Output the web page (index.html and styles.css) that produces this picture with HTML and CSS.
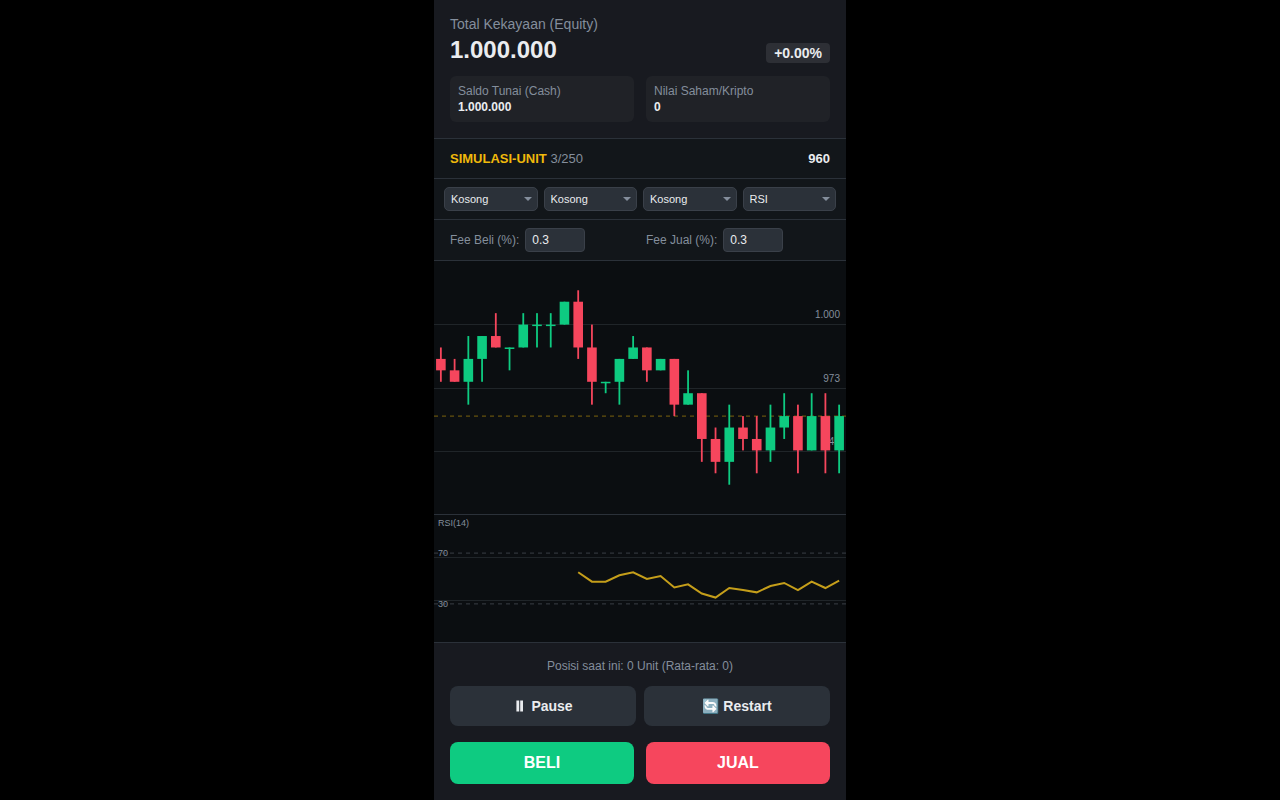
FILE: index.html
```html
<!DOCTYPE html>
<html lang="id">
<head>
<meta charset="utf-8">
<meta name="viewport" content="width=device-width, initial-scale=1">
<title>Simulasi Trading</title>
<link rel="stylesheet" href="styles.css">
</head>
<body>
<main class="app">
  <header class="summary">
    <div class="summary-label">Total Kekayaan (Equity)</div>
    <div class="equity-row">
      <div class="equity">1.000.000</div>
      <div class="badge">+0.00%</div>
    </div>
    <div class="stats">
      <div class="stat"><div class="stat-label">Saldo Tunai (Cash)</div><div class="stat-value">1.000.000</div></div>
      <div class="stat"><div class="stat-label">Nilai Saham/Kripto</div><div class="stat-value">0</div></div>
    </div>
  </header>

  <section class="ticker">
    <div><span class="ticker-name">SIMULASI-UNIT</span> <span class="ticker-count">3/250</span></div>
    <div class="ticker-price">960</div>
  </section>

  <section class="indicators">
    <div class="select-wrap"><select class="select" aria-label="Indikator 1"><option>Kosong</option><option>RSI</option></select></div>
    <div class="select-wrap"><select class="select" aria-label="Indikator 2"><option>Kosong</option><option>RSI</option></select></div>
    <div class="select-wrap"><select class="select" aria-label="Indikator 3"><option>Kosong</option><option>RSI</option></select></div>
    <div class="select-wrap"><select class="select" aria-label="Indikator 4"><option>Kosong</option><option selected>RSI</option></select></div>
  </section>

  <section class="fees">
    <div class="fee"><label for="fee-buy">Fee Beli (%):</label><input class="fee-input" id="fee-buy" type="text" inputmode="decimal" value="0.3"></div>
    <div class="fee"><label for="fee-sell">Fee Jual (%):</label><input class="fee-input" id="fee-sell" type="text" inputmode="decimal" value="0.3"></div>
  </section>

  <section class="charts">
    <div class="pane pane-price"><svg class="plot" id="price" role="img" aria-label="Grafik harga"></svg></div>
    <div class="pane pane-rsi"><svg class="plot" id="rsi" role="img" aria-label="RSI(14)"></svg></div>
  </section>

  <footer class="controls">
    <div class="position">Posisi saat ini: 0 Unit (Rata-rata: 0)</div>
    <div class="tools">
      <button class="btn btn-tool" type="button"><svg class="pause-icon" viewBox="0 0 14 14" aria-hidden="true"><path d="M3.4 1.5h2.8v11H3.4zM7.2 1.5h2.8v11H7.2z"/></svg>Pause</button>
      <button class="btn btn-tool" type="button">🔄 Restart</button>
    </div>
    <div class="trade">
      <button class="btn btn-buy" type="button">BELI</button>
      <button class="btn btn-sell" type="button">JUAL</button>
    </div>
  </footer>
</main>
<script src="chart.js"></script>
</body>
</html>
```

FILE: styles.css
```css
* { box-sizing: border-box; }

body {
  margin: 0;
  background: #000;
  color: #eaecef;
  font-family: "Liberation Sans", Arial, sans-serif;
}

.app {
  display: flex;
  flex-direction: column;
  width: 100%;
  max-width: 412px;
  height: 100vh;
  min-height: 640px;
  margin: 0 auto;
  background: #0b0e11;
}

.summary {
  padding: 16px;
  background: #181a20;
  border-bottom: 1px solid #2b3139;
}
.summary-label { font-size: 14px; line-height: 16px; color: #848e9c; }
.equity-row {
  display: flex;
  justify-content: space-between;
  align-items: flex-end;
  margin: 4px 0 12px;
}
.equity { font-size: 24px; line-height: 28px; font-weight: bold; }
.badge {
  padding: 2px 8px;
  margin-bottom: 1px;
  border-radius: 4px;
  background: #2d2f35;
  font-size: 14px;
  line-height: 16px;
  font-weight: bold;
}
.stats { display: grid; grid-template-columns: 1fr 1fr; gap: 12px; }
.stat {
  padding: 8px;
  border-radius: 6px;
  background: #202227;
  font-size: 12px;
  line-height: 14px;
}
.stat-label { color: #848e9c; margin-bottom: 2px; }
.stat-value { font-weight: bold; }

.ticker {
  display: flex;
  justify-content: space-between;
  padding: 12px 16px;
  background: #12161a;
  border-bottom: 1px solid #2b3139;
  font-size: 13px;
  line-height: 15px;
}
.ticker-name { font-weight: bold; color: #f0b90b; }
.ticker-count { color: #848e9c; }
.ticker-price { font-weight: bold; }

.indicators {
  display: grid;
  grid-template-columns: repeat(4, 1fr);
  gap: 6px;
  padding: 8px 10px;
  background: #12161a;
  border-bottom: 1px solid #2b3139;
}
.select-wrap { position: relative; display: flex; }
.select-wrap::after {
  content: "";
  position: absolute;
  right: 6px;
  top: 10px;
  border: 4px solid transparent;
  border-top-color: #848e9c;
  border-bottom: 0;
  pointer-events: none;
}
.select {
  appearance: none;
  width: 100%;
  height: 24px;
  padding: 0 18px 0 6px;
  border: 1px solid #3a4049;
  border-radius: 5px;
  background: #2b3139;
  color: #eaecef;
  font-family: inherit;
  font-size: 11px;
}

.fees {
  display: grid;
  grid-template-columns: 1fr 1fr;
  gap: 12px;
  padding: 8px 16px;
  background: #12161a;
  border-bottom: 1px solid #2b3139;
  font-size: 12px;
  color: #848e9c;
}
.fee { display: flex; align-items: center; gap: 6px; }
.fee-input {
  width: 60px;
  height: 24px;
  padding: 0 6px;
  border: 1px solid #3a4049;
  border-radius: 4px;
  background: #2b3139;
  color: #eaecef;
  font-family: inherit;
  font-size: 12px;
}

.charts { display: flex; flex-direction: column; flex: 1; min-height: 0; }
.pane { min-height: 0; border-bottom: 1px solid #2b3139; }
.pane-price { flex: 2; }
.pane-rsi { flex: 1; }
.plot { display: block; width: 100%; height: 100%; }
.grid { stroke: #202529; }
.level { stroke: #3a3f46; stroke-dasharray: 4 4; }
.last { stroke: #f0b90b; stroke-opacity: 0.5; stroke-dasharray: 4 4; }
.up { fill: #0ecb81; stroke: none; }
.down { fill: #f6465d; stroke: none; }
.rsi-line { fill: none; stroke: #d9ae1c; stroke-opacity: 0.9; stroke-width: 2; }
.axis { fill: #848e9c; font-size: 10px; text-anchor: end; }
.note { fill: #848e9c; font-size: 9px; }

.controls { padding: 16px; background: #181a20; }
.position {
  margin-bottom: 12px;
  text-align: center;
  font-size: 12px;
  line-height: 15px;
  color: #848e9c;
}
.tools { display: grid; grid-template-columns: 1fr 1fr; gap: 8px; margin-bottom: 16px; }
.trade { display: grid; grid-template-columns: 1fr 1fr; gap: 12px; }
.btn {
  padding: 0;
  border: 0;
  border-radius: 8px;
  font-family: inherit;
  font-weight: bold;
  cursor: pointer;
}
.btn-tool { height: 40px; background: #2b3139; color: #eaecef; font-size: 14px; }
.pause-icon { width: 14px; height: 14px; margin-right: 4px; vertical-align: -2px; fill: currentColor; }
.btn-buy, .btn-sell { height: 42px; color: #fff; font-size: 16px; }
.btn-buy { background: #0ecb81; }
.btn-sell { background: #f6465d; }
```

FILE: chart.js
```js
// Each candle: open, high, low, close.
const candles = [
  [985, 990, 975, 980], [980, 985, 975, 975], [975, 995, 965, 985], [985, 995, 975, 995],
  [995, 1005, 990, 990], [990, 990, 980, 990], [990, 1005, 990, 1000], [1000, 1005, 990, 1000],
  [1000, 1005, 990, 1000], [1000, 1010, 1000, 1010], [1010, 1015, 985, 990], [990, 1000, 965, 975],
  [975, 975, 970, 975], [975, 985, 965, 985], [985, 995, 985, 990], [990, 990, 975, 980],
  [980, 985, 980, 985], [985, 985, 960, 965], [965, 980, 965, 970], [970, 970, 940, 950],
  [950, 955, 935, 940], [940, 965, 930, 955], [955, 960, 945, 950], [950, 960, 935, 945],
  [945, 965, 940, 955], [955, 970, 950, 960], [960, 965, 935, 945], [945, 970, 945, 960],
  [960, 970, 935, 945], [945, 965, 935, 960]
];
const rsi = [54.9, 47.5, 47.5, 52.5, 54.9, 49.6, 52, 42.9, 45.4, 38.2, 35, 42.5, 40.9, 39.1, 44.1, 46.5, 40.9, 47.6, 42.5, 48.4];

function line(cls, w, y) {
  return `<line class="${cls}" x1="0" x2="${w}" y1="${y}" y2="${y}"/>`;
}

function drawPrice() {
  const svg = document.getElementById("price");
  const w = svg.clientWidth, h = svg.clientHeight;
  const high = 1027.8, low = 917.2;
  const y = p => (high - p) / (high - low) * h;
  const step = w / candles.length;
  let out = "";
  ["1.000", "973", "945"].forEach((label, i) => {
    const gy = Math.round(h * (i + 1) / 4) + 0.5;
    out += line("grid", w, gy) + `<text class="axis" x="${w - 6}" y="${gy - 7}">${label}</text>`;
  });
  out += line("last", w, y(960));
  candles.forEach(([o, hi, lo, c], i) => {
    const x = step * (i + 0.5), bw = step * 0.7;
    const cls = c >= o ? "up" : "down";
    const top = y(Math.max(o, c)), body = Math.max(1.5, Math.abs(y(o) - y(c)));
    out += `<rect class="${cls}" x="${x - 0.9}" y="${y(hi)}" width="1.8" height="${y(lo) - y(hi)}"/>`;
    out += `<rect class="${cls}" x="${x - bw / 2}" y="${top}" width="${bw}" height="${body}"/>`;
  });
  svg.innerHTML = out;
}

function drawRsi() {
  const svg = document.getElementById("rsi");
  const w = svg.clientWidth, h = svg.clientHeight;
  const y = v => (100 - v) / 100 * h;
  const step = w / candles.length, start = candles.length - rsi.length;
  const points = rsi.map((v, i) => `${step * (start + i + 0.5)},${y(v)}`).join(" ");
  let out = line("grid", w, Math.floor(h / 3) + 0.5) + line("grid", w, Math.round(h * 2 / 3) + 0.5);
  [70, 30].forEach(v => {
    out += line("level", w, y(v)) + `<text class="note" x="4" y="${y(v) + 3}">${v}</text>`;
  });
  out += `<text class="note" x="4" y="11">RSI(14)</text>`;
  out += `<polyline class="rsi-line" points="${points}"/>`;
  svg.innerHTML = out;
}

function draw() {
  drawPrice();
  drawRsi();
}

window.addEventListener("resize", draw);
draw();
```
